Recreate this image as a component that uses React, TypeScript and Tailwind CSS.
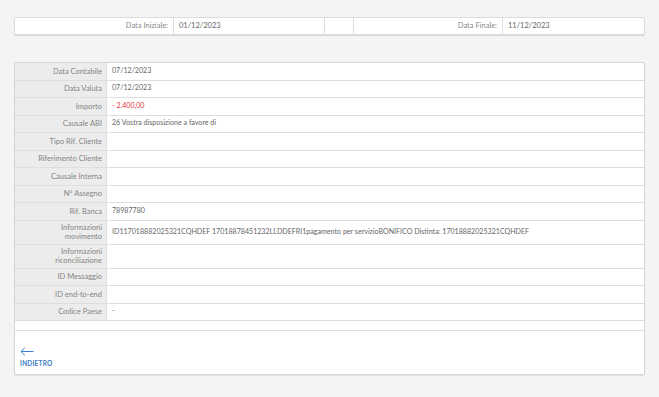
import { ReactNode } from "react";

type Row = {
  label: ReactNode;
  value?: ReactNode;
  tall?: boolean;
};

const rows: Row[] = [
  { label: "Data Contabile", value: "07/12/2023" },
  { label: "Data Valuta", value: "07/12/2023" },
  { label: "Importo", value: <span className="text-[#e2323f]">- 2.400,00</span> },
  { label: "Causale ABI", value: "26 Vostra disposizione a favore di" },
  { label: "Tipo Rif. Cliente" },
  { label: "Riferimento Cliente" },
  { label: "Causale Interna" },
  { label: "N° Assegno" },
  { label: "Rif. Banca", value: "78987780" },
  {
    label: (
      <>
        Informazioni
        <br />
        movimento
      </>
    ),
    value:
      "ID117018882025321CQHDEF 17018878451232LLDDEFRI1pagamento per servizioBONIFICO Distinta: 17018882025321CQHDEF",
    tall: true,
  },
  {
    label: (
      <>
        Informazioni
        <br />
        riconciliazione
      </>
    ),
    tall: true,
  },
  { label: "ID Messaggio" },
  { label: "ID end-to-end" },
  { label: "Codice Paese", value: "-" },
];

export default function App() {
  return (
    <div
      className="min-h-[397px] bg-[#f4f4f4] px-[14px] pt-[17px] text-[7.5px] text-[#7a7a7a]"
      style={{ fontFamily: "Lato, 'Open Sans', sans-serif" }}
    >
      {/* Period filter bar */}
      <div className="grid h-[18px] grid-cols-[159px_151px_29px_149px_1fr] rounded-[2px] border border-[#dcdcdc] bg-white shadow-[0_1px_1px_rgba(0,0,0,0.12)]">
        <div className="flex items-center justify-end border-r border-[#dcdcdc] pr-[5px] text-[#888]">Data Iniziale:</div>
        <div className="flex items-center border-r border-[#dcdcdc] pl-[5px] text-[#666]">01/12/2023</div>
        <div className="border-r border-[#dcdcdc]" />
        <div className="flex items-center justify-end border-r border-[#dcdcdc] pr-[5px] text-[#888]">Data Finale:</div>
        <div className="flex items-center pl-[5px] text-[#666]">11/12/2023</div>
      </div>

      {/* Movement detail */}
      <div className="mt-[27px] rounded-[2px] border border-[#d6d6d6] bg-white shadow-[0_1px_1px_rgba(0,0,0,0.08)]">
        {rows.map((row, i) => (
          <div
            key={i}
            className={`grid grid-cols-[92px_1fr] border-b border-[#dedede] ${row.tall ? "h-[24px]" : "h-[17.5px]"}`}
          >
            <div className="flex items-center justify-end border-r border-[#dedede] bg-[#ececec] pr-[4px] text-right leading-[9px] text-[#858585]">
              {row.label}
            </div>
            <div className="flex items-center truncate pl-[5px] text-[7.1px] text-[#666]">{row.value}</div>
          </div>
        ))}
        <div className="h-[10px] border-b border-[#dedede]" />
        <div className="flex h-[43px] flex-col justify-end px-[5px] pb-[5px]">
          <svg width="14" height="9" viewBox="0 0 14 9" fill="none" stroke="#3b7cc4" strokeWidth="1">
            <path d="M13.5 4.5H1M4.8 0.8 1 4.5l3.8 3.7" />
          </svg>
          <span className="mt-[3px] text-[6.5px] font-bold tracking-[0.2px] text-[#3b7cc4]">INDIETRO</span>
        </div>
      </div>
    </div>
  );
}
